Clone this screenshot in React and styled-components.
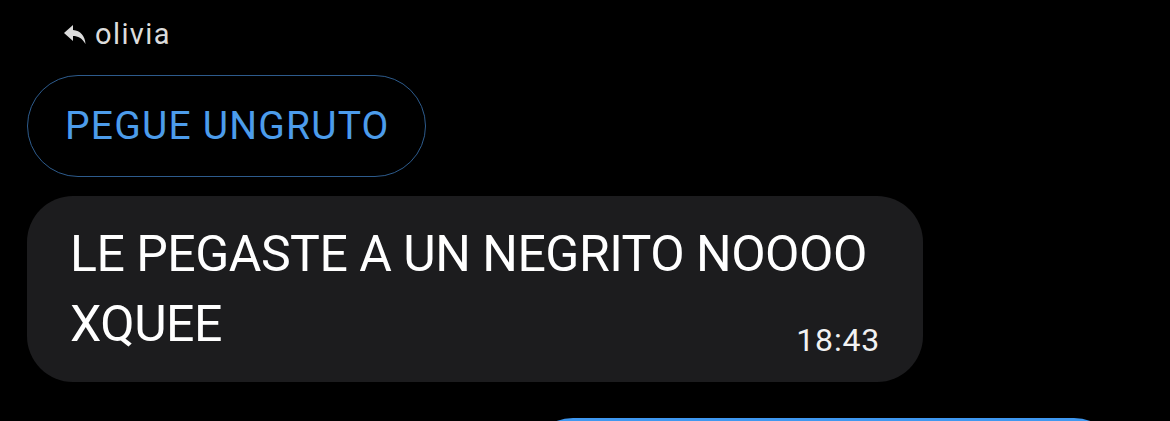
import styled, { createGlobalStyle } from "styled-components";

const GlobalStyle = createGlobalStyle`
  html, body {
    margin: 0;
    padding: 0;
    background: #000;
  }
  body {
    font-family: Roboto, "Noto Sans", sans-serif;
    -webkit-font-smoothing: antialiased;
  }
`;

const Thread = styled.div`
  width: 1170px;
  height: 421px;
  overflow: hidden;
  background: #000;
  box-sizing: border-box;
  padding: 18px 0 0 27px;
  display: flex;
  flex-direction: column;
  align-items: flex-start;

  & > * {
    flex-shrink: 0;
  }
`;

const ReplyLabel = styled.div`
  display: flex;
  align-items: center;
  gap: 9px;
  margin-left: 37px;
  height: 32px;
  color: #dcdcdc;
  font-size: 29px;
  letter-spacing: 1.4px;
`;

const QuotePill = styled.div`
  margin-top: 25px;
  box-sizing: border-box;
  height: 102px;
  width: 399px;
  border: 1.5px solid #2d5b8c;
  border-radius: 51px;
  display: flex;
  align-items: center;
  padding-left: 37px;
  color: #4c9ceb;
  font-size: 39px;
  letter-spacing: 1.2px;
`;

const Bubble = styled.div`
  margin-top: 19px;
  box-sizing: border-box;
  width: 896px;
  height: 186px;
  border-radius: 46px;
  background: ${(p) => p.$bg};
  padding: 23px 40px 0 43px;
  position: relative;
  color: #fff;
  font-size: 50px;
  line-height: 70px;
  letter-spacing: -0.5px;
`;

const Time = styled.span`
  position: absolute;
  right: 43px;
  bottom: 26px;
  font-size: 32px;
  line-height: 1;
  letter-spacing: 0.8px;
  color: #f2f2f2;
`;

const OutBubble = styled.div`
  margin-top: 36px;
  margin-left: 500px;
  width: 593px;
  height: 100px;
  border-radius: 46px;
  background: #3f98f0;
`;

function ReplyArrow() {
  return (
    <svg width="22" height="19" viewBox="0 0 22 19" fill="#dcdcdc">
      <path d="M9 0 L0 8 L9 16 V11 C14 11 18 13 21.5 19 C21 11 16.5 5.5 9 5 Z" />
    </svg>
  );
}

export default function App() {
  return (
    <>
      <GlobalStyle />
      <Thread>
        <ReplyLabel>
          <ReplyArrow />
          olivia
        </ReplyLabel>
        <QuotePill>PEGUE UNGRUTO</QuotePill>
        <Bubble $bg="#1c1c1e">
          LE PEGASTE A UN NEGRITO NOOOO
          <br />
          XQUEE
          <Time>18:43</Time>
        </Bubble>
        <OutBubble />
      </Thread>
    </>
  );
}
